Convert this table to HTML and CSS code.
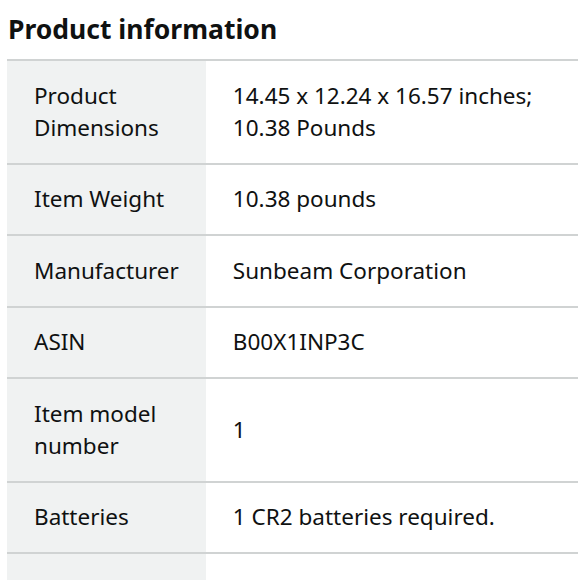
FILE: index.html
```html
<!DOCTYPE html>
<html>
<head>
<meta charset="utf-8">
<link rel="stylesheet" href="styles.css">
</head>
<body>
<div class="page">
  <h2 class="title">Product information</h2>
  <table class="info">
    <tr><th>Product Dimensions</th><td>14.45 x 12.24 x 16.57 inches; 10.38 Pounds</td></tr>
    <tr><th>Item Weight</th><td>10.38 pounds</td></tr>
    <tr><th>Manufacturer</th><td>Sunbeam Corporation</td></tr>
    <tr><th>ASIN</th><td>B00X1INP3C</td></tr>
    <tr><th>Item model number</th><td>1</td></tr>
    <tr><th>Batteries</th><td>1 CR2 batteries required.</td></tr>
    <tr class="tail"><th></th><td></td></tr>
  </table>
</div>
</body>
</html>
```
FILE: styles.css
```css
html, body {
  margin: 0;
  padding: 0;
  background: #ffffff;
}
body {
  font-family: "Noto Sans", "Open Sans", sans-serif;
  color: #0f1111;
  overflow: hidden;
}
.page {
  padding: 0 2px 0 7px;
}
.title {
  margin: 0;
  padding: 11px 0 0 1px;
  height: 59px;
  box-sizing: border-box;
  font-size: 26.5px;
  line-height: 36px;
  font-weight: 700;
}
.info {
  width: 100%;
  border-collapse: collapse;
  border-top: 2px solid #d0d3d3;
}
.info tr {
  border-bottom: 2px solid #d0d3d3;
}
.info th, .info td {
  font-size: 22.5px;
  line-height: 32px;
  font-weight: 400;
  text-align: left;
  vertical-align: middle;
  padding: 18.75px 27px;
}
.info th {
  width: 144px;
  background: #f0f2f2;
}
.info .tail th, .info .tail td {
  height: 70px;
}
```
